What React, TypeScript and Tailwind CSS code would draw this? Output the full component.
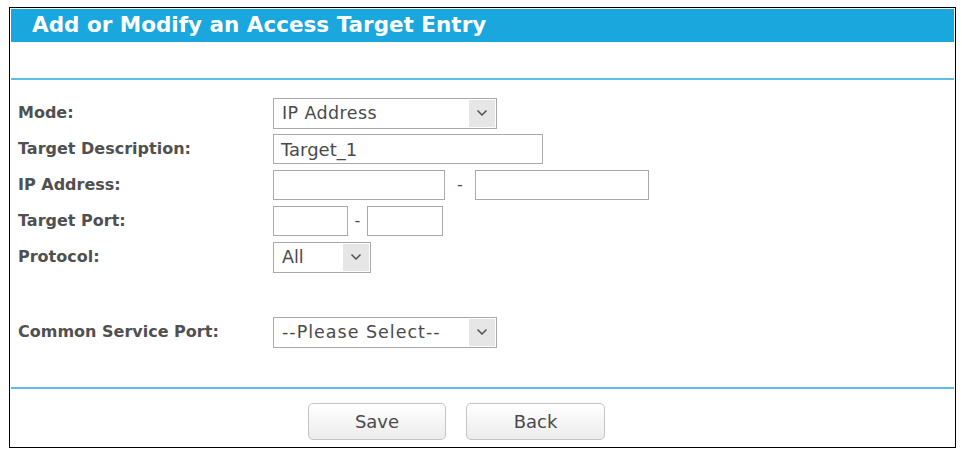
import { ChevronDown } from "lucide-react";

const font = { fontFamily: '"DejaVu Sans", Verdana, sans-serif' };

function Select({
  value,
  width,
  tracking = "",
  arrowW = 26,
}: {
  value: string;
  width: string;
  tracking?: string;
  arrowW?: number;
}) {
  return (
    <div className={`flex h-[31px] ${width} items-stretch border border-[#a9a9a9] bg-white`}>
      <span className={`flex flex-1 items-center pl-2 text-[17.5px] text-[#4a4a4a] ${tracking}`}>{value}</span>
      <span
        className="m-[1px] flex items-center justify-center bg-[#e6e6e6]"
        style={{ width: arrowW }}
      >
        <ChevronDown size={16} strokeWidth={2.5} className="text-[#555]" />
      </span>
    </div>
  );
}

function Input({ width, value = "" }: { width: string; value?: string }) {
  return (
    <div className={`flex h-[30px] ${width} items-center border border-[#a9a9a9] bg-white pl-[7px] text-[18px] text-[#4a4a4a]`}>
      {value}
    </div>
  );
}

function Row({ label, children }: { label: string; children: React.ReactNode }) {
  return (
    <div className="flex h-[36px] items-center">
      <div className="w-[255px] text-[16px] font-bold text-[#505050]">{label}</div>
      <div className="flex items-center">{children}</div>
    </div>
  );
}

export default function App() {
  return (
    <div className="h-[451px] w-[962px] bg-white pl-[9px] pt-[7px]" style={font}>
      <div className="flex h-[441px] w-[947px] flex-col border-[1.5px] border-black p-[1px]">
        <div className="flex h-[33px] items-center bg-[#19a7dd] pl-[21px] text-[21.5px] font-bold text-white">
          Add or Modify an Access Target Entry
        </div>
        <div className="h-[36px]" />
        <div className="h-[2px] bg-[#5cbde9]" />
        <div className="flex flex-col pl-[7px] pt-[15px]">
          <Row label="Mode:">
            <Select value="IP Address" width="w-[224px]" tracking="tracking-[0.4px]" />
          </Row>
          <Row label="Target Description:">
            <Input width="w-[270px]" value="Target_1" />
          </Row>
          <Row label="IP Address:">
            <Input width="w-[172px]" />
            <span className="w-[30px] text-center text-[16px] text-[#4a4a4a]">-</span>
            <Input width="w-[174px]" />
          </Row>
          <Row label="Target Port:">
            <Input width="w-[75px]" />
            <span className="w-[19px] text-center text-[16px] text-[#4a4a4a]">-</span>
            <Input width="w-[76px]" />
          </Row>
          <Row label="Protocol:">
            <Select value="All" width="w-[98px]" />
          </Row>
          <div className="h-[39px]" />
          <Row label="Common Service Port:">
            <Select value="--Please Select--" width="w-[224px]" tracking="tracking-[1px]" />
          </Row>
        </div>
        <div className="h-[37px]" />
        <div className="h-[2px] bg-[#5cbde9]" />
        <div className="flex gap-[20px] pl-[297px] pt-[14px]">
          <button className="h-[37px] w-[138px] rounded-[5px] border border-[#c4c4c4] bg-gradient-to-b from-white to-[#ececec] text-[18px] text-[#4a4a4a]">
            Save
          </button>
          <button className="h-[37px] w-[139px] rounded-[5px] border border-[#c4c4c4] bg-gradient-to-b from-white to-[#ececec] text-[18px] text-[#4a4a4a]">
            Back
          </button>
        </div>
      </div>
    </div>
  );
}
